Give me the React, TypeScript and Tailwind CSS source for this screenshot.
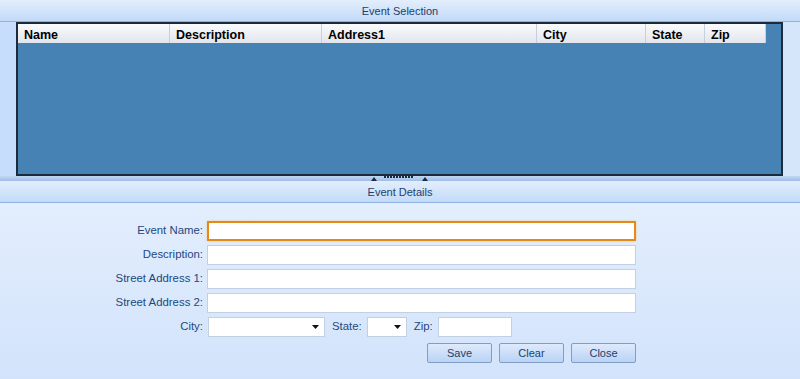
const columns = [
  { label: "Name", w: "w-[152px]" },
  { label: "Description", w: "w-[152px]" },
  { label: "Address1", w: "w-[215px]" },
  { label: "City", w: "w-[109px]" },
  { label: "State", w: "w-[59px]" },
  { label: "Zip", w: "w-[61px]" },
];

function PanelHeader({ title }: { title: string }) {
  return (
    <div className="flex h-[22px] items-center justify-center border-b border-[#8db2e3] bg-gradient-to-b from-[#e3eefc] to-[#c2daf8] pt-[2px] text-[11px] text-[#1e3e6e]">
      {title}
    </div>
  );
}

function TextBox({ className = "", focused = false }: { className?: string; focused?: boolean }) {
  return (
    <div
      className={
        "h-5 bg-white " +
        (focused
          ? "border-2 border-[#e68a17] shadow-[0_0_2px_#f7c27a] "
          : "border border-[#c3d0e2] ") +
        className
      }
    />
  );
}

function Combo({ className = "" }: { className?: string }) {
  return (
    <div className={"flex h-5 items-center justify-end border border-[#c3d0e2] bg-white pr-[5px] " + className}>
      <svg width="7" height="4" viewBox="0 0 7 4">
        <path d="M0 0h7L3.5 4z" fill="#111" />
      </svg>
    </div>
  );
}

function Btn({ label }: { label: string }) {
  return (
    <div className="flex h-5 w-[65px] items-center justify-center rounded-[2px] border border-[#7f9dc6] bg-gradient-to-b from-[#dfeafb] to-[#b9d3f5] text-[11px] text-[#1e3e6e]">
      {label}
    </div>
  );
}

function Label({ text, className = "" }: { text: string; className?: string }) {
  return <div className={"text-right text-[11.4px] text-[#24477c] " + className}>{text}</div>;
}

export default function App() {
  return (
    <div className="flex h-[379px] w-[800px] flex-col overflow-hidden bg-[#d3e4fb] font-['Liberation_Sans',sans-serif]">
      <PanelHeader title="Event Selection" />
      <div className="flex h-[154px] bg-[#d5e6fb]">
        <div className="w-4 bg-[#c6ddfb]" />
        <div className="w-[767px] border-2 border-[#1c2b3c] bg-[#4682b4]">
          <div className="flex h-[19px]">
            {columns.map((c) => (
              <div
                key={c.label}
                className={
                  c.w +
                  " flex items-center border-r border-[#c7cfdc] bg-gradient-to-b from-[#fafbfd] to-[#e2e5ec] pl-[6px] pt-[3px] text-[12.5px] font-bold text-black"
                }
              >
                {c.label}
              </div>
            ))}
          </div>
        </div>
        <div className="flex-1" />
      </div>
      {/* splitter */}
      <div className="relative h-[5px] bg-gradient-to-b from-[#c2d8f4] to-[#9fbde6]">
        <div className="absolute left-[371px] top-0 flex h-[5px] items-center gap-[45px]">
          <svg width="6" height="4" viewBox="0 0 6 4">
            <path d="M0 4L3 0L6 4z" fill="#1c2b3c" />
          </svg>
          <svg width="6" height="4" viewBox="0 0 6 4">
            <path d="M0 4L3 0L6 4z" fill="#1c2b3c" />
          </svg>
        </div>
        <div className="absolute left-[384px] top-0 flex gap-[1px]">
          {Array.from({ length: 10 }).map((_, i) => (
            <div key={i} className="h-[2px] w-[2px] bg-[#1c2b3c]" />
          ))}
        </div>
      </div>
      <PanelHeader title="Event Details" />
      <div className="flex-1 bg-gradient-to-b from-[#e3eefd] to-[#d2e3fb] pt-[18px]">
        <div className="grid grid-cols-[203px_429px] items-center gap-x-[4px] gap-y-1">
          <Label text="Event Name:" />
          <TextBox focused />
          <Label text="Description:" />
          <TextBox />
          <Label text="Street Address 1:" />
          <TextBox />
          <Label text="Street Address 2:" />
          <TextBox />
          <Label text="City:" />
          <div className="flex items-center">
            <Combo className="ml-[1px] w-[117px]" />
            <Label text="State:" className="ml-[7px]" />
            <Combo className="ml-[5px] w-[40px]" />
            <Label text="Zip:" className="ml-[7px]" />
            <TextBox className="ml-[5px] w-[74px]" />
          </div>
        </div>
        <div className="mt-[6px] flex justify-end gap-[7px] pr-[164px]">
          <Btn label="Save" />
          <Btn label="Clear" />
          <Btn label="Close" />
        </div>
      </div>
    </div>
  );
}
